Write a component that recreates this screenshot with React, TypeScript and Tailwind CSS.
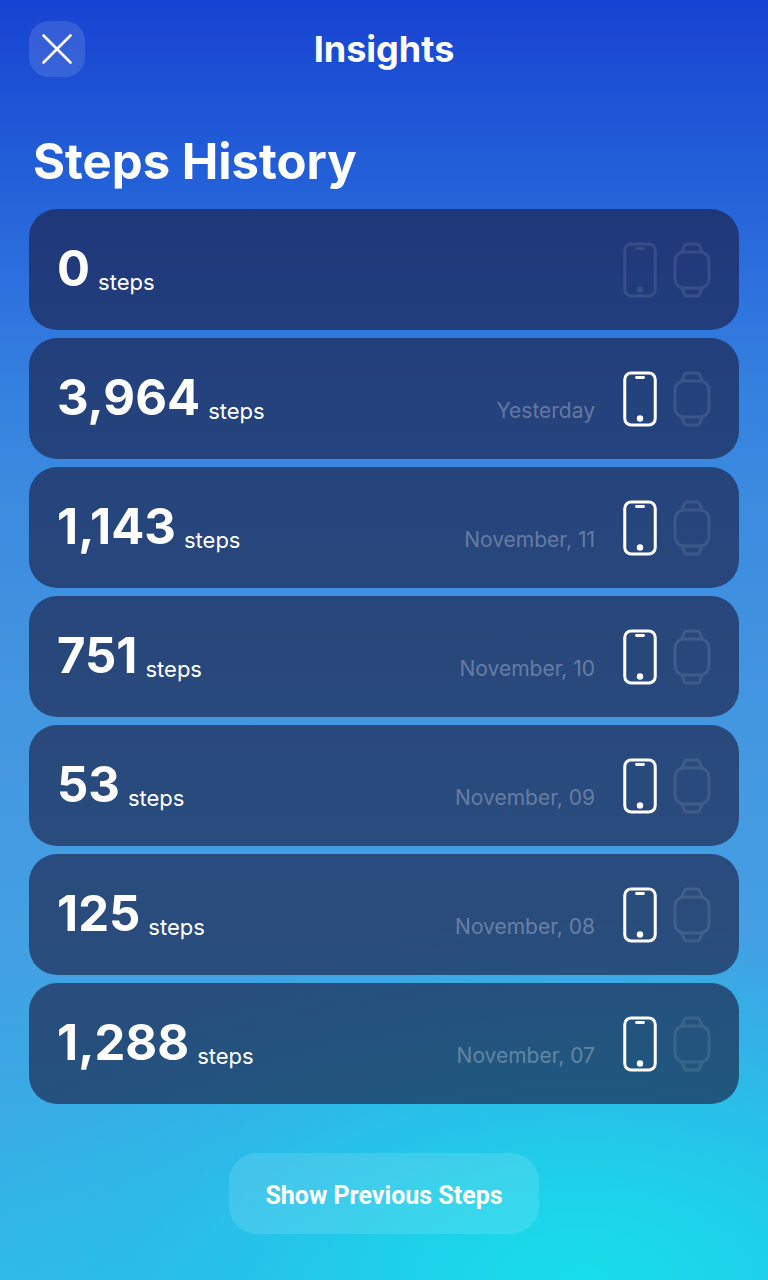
interface StepsEntry {
    steps: string;
    date?: string;
    phone: boolean;
    watch: boolean;
}

const history: StepsEntry[] = [
    { steps: '0', phone: false, watch: false },
    { steps: '3,964', date: 'Yesterday', phone: true, watch: false },
    { steps: '1,143', date: 'November, 11', phone: true, watch: false },
    { steps: '751', date: 'November, 10', phone: true, watch: false },
    { steps: '53', date: 'November, 09', phone: true, watch: false },
    { steps: '125', date: 'November, 08', phone: true, watch: false },
    { steps: '1,288', date: 'November, 07', phone: true, watch: false },
];

function PhoneIcon({ active }: { active: boolean }) {
    return (
        <svg
            className={active ? 'w-[34px] h-14 text-white' : 'w-[34px] h-14 text-white opacity-10'}
            viewBox="0 0 34 56"
            fill="none"
            stroke="currentColor"
            aria-hidden="true"
        >
            <rect x="1.75" y="2" width="30.5" height="52" rx="6.5" strokeWidth="3" />
            <path d="M13.5 6.5h7" strokeWidth="2.8" strokeLinecap="round" />
            <circle cx="17" cy="47.5" r="3.2" fill="currentColor" stroke="none" />
        </svg>
    );
}

function WatchIcon({ active }: { active: boolean }) {
    return (
        <svg
            className={active ? 'w-[38px] h-14 text-white' : 'w-[38px] h-14 text-white opacity-10'}
            viewBox="0 0 38 56"
            fill="none"
            stroke="currentColor"
            strokeWidth="3"
            strokeLinejoin="round"
            aria-hidden="true"
        >
            <rect x="2" y="10" width="34" height="36" rx="9" />
            <path d="M8.5 10.5l2.8-6.7Q12 2 13.7 2h10.6q1.7 0 2.4 1.8L29.5 10.5" />
            <path d="M8.5 45.5l2.8 6.7Q12 54 13.7 54h10.6q1.7 0 2.4-1.8L29.5 45.5" />
        </svg>
    );
}

function StepsCard({ entry }: { entry: StepsEntry }) {
    return (
        <li className="flex items-center justify-between h-[121px] px-7 rounded-[28px] bg-[#1b1e43]/64">
            <p className="flex items-end gap-2 pb-0.5">
                <span className="text-[49px] leading-[58px] font-bold">{entry.steps}</span>
                <span className="text-[22px] leading-8">steps</span>
            </p>

            {/* Date & source devices */}
            <div className="flex items-end">
                <span className="mr-7 text-[21px] leading-8 text-white/30">{entry.date}</span>
                <div className="flex items-center gap-4">
                    <PhoneIcon active={entry.phone} />
                    <WatchIcon active={entry.watch} />
                </div>
            </div>
        </li>
    );
}

export default function App() {
    return (
        <div className="min-h-screen px-[29px] pt-[21px] pb-[46px] font-['Inter',sans-serif] text-white bg-[radial-gradient(ellipse_84%_28%_at_76%_100%,#18deea_0%,#1dd2ea_25%,#22c8eacc_48%,#26bfea80_70%,#28bcea00_100%),linear-gradient(to_bottom,#1843d2_0%,#2360d8_14%,#2d70de_22%,#3480df_30%,#3b8adf_38%,#4396e0_55%,#449fe3_73%,#38ace5_88%,#30bae8_100%)]">
            {/* Top bar */}
            <header className="grid grid-cols-[1fr_auto_1fr] items-center">
                <button
                    type="button"
                    aria-label="Close"
                    className="flex items-center justify-center w-14 h-14 rounded-[20px] bg-white/12"
                >
                    <svg className="w-8 h-8" viewBox="0 0 32 32" fill="none" stroke="currentColor" strokeWidth="2.6" strokeLinecap="round" aria-hidden="true">
                        <path d="M2.5 2.5l27 27M29.5 2.5l-27 27" />
                    </svg>
                </button>
                <h1 className="text-4xl font-bold">Insights</h1>
            </header>

            <main className="flex flex-col">
                <h2 className="mt-[55px] ml-1 text-[49px] leading-[60px] font-bold">Steps History</h2>
                <ul className="flex flex-col gap-2 mt-[17px]">
                    {history.map((entry) => (
                        <StepsCard key={entry.steps} entry={entry} />
                    ))}
                </ul>
                <button
                    type="button"
                    className="self-center mt-[49px] px-9 pt-1 h-[81px] rounded-[28px] bg-white/12 font-['Roboto',sans-serif] text-[25px] font-bold"
                >
                    Show Previous Steps
                </button>
            </main>
        </div>
    );
}
